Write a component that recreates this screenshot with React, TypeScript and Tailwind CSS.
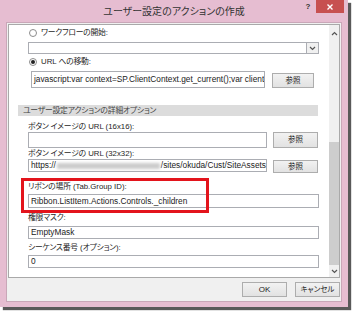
import React from 'react';

const jp = "font-['Liberation_Sans','Noto_Sans_CJK_JP',sans-serif] [font-feature-settings:'palt']";

const J = ({ children }: { children: React.ReactNode }) => (
  <span className="tracking-[-0.2px]">{children}</span>
);

const Radio = ({ checked }: { checked?: boolean }) => (
  <span className="w-[8px] h-[8px] rounded-full border border-[#8c8c8c] bg-white flex items-center justify-center">
    {checked && <span className="w-[4px] h-[4px] rounded-full bg-[#222]" />}
  </span>
);

const Button = ({ label, className = '' }: { label: string; className?: string }) => (
  <div
    className={`flex items-center justify-center border border-[#adadad] bg-gradient-to-b from-[#f2f2f2] to-[#e2e2e2] text-[7.5px] text-[#222] ${className}`}
  >
    {label}
  </div>
);

const Input = ({ value, className = '' }: { value?: React.ReactNode; className?: string }) => (
  <div
    className={`flex items-center border border-[#abadb3] bg-white pl-[2px] overflow-hidden whitespace-nowrap text-[8.3px] text-[#222] font-['Liberation_Sans',sans-serif] ${className}`}
  >
    {value}
  </div>
);

const Label = ({ children, className = '' }: { children: React.ReactNode; className?: string }) => (
  <div className={`h-[9px] ml-[19px] flex items-center text-[7.8px] text-[#1e1e1e] whitespace-pre ${className}`}>
    {children}
  </div>
);

const Chevron = ({ up }: { up?: boolean }) => (
  <svg width="7" height="5" viewBox="0 0 7 5">
    <path d={up ? 'M1 4 L3.5 1.5 L6 4' : 'M1 1 L3.5 3.5 L6 1'} fill="none" stroke="#555" strokeWidth="1.2" />
  </svg>
);

export default function App() {
  return (
    <div className={`w-[353px] h-[312px] bg-white ${jp}`}>
      <div className="w-[348px] h-[307px] bg-[#e6bdd1] shadow-[3px_3px_1px_rgba(60,60,60,0.85)] flex flex-col px-[6px]">
        {/* title bar */}
        <div className="h-[22px] flex -mx-[6px]">
          <div className="w-[48px]" />
          <div className="flex-1 flex items-center justify-center text-[10px] text-[#333] pt-[1px]">
            ユーザー設定のアクションの作成
          </div>
          <div className="w-[48px] flex items-start pr-[4px]">
            <div className="w-[16px] h-[13px] flex items-center justify-center text-[8px] font-bold text-[#333]">?</div>
            <div className="w-[28px] h-[13px] bg-[#c75050] flex items-center justify-center">
              <svg width="6" height="6" viewBox="0 0 6 6">
                <path d="M0.5 0.5 L5.5 5.5 M5.5 0.5 L0.5 5.5" stroke="#fff" strokeWidth="1.4" />
              </svg>
            </div>
          </div>
        </div>

        {/* client area */}
        <div className="h-[280px] border border-[#c9a7b8] bg-[#f0f0f0] flex flex-col px-[1px]">
          <div className="mt-[1px] h-[254px] border border-[#a9a9a9] bg-white flex">
            <div className="relative flex-1 flex flex-col">
              <div className="mt-[3px] h-[10px] flex items-center">
                <div className="ml-[20px]"><Radio /></div>
                <span className="ml-[4px] text-[7.8px] text-[#1e1e1e]"><J>ワークフローの開始:</J></span>
              </div>
              <div className="mt-[4px] ml-[19px] w-[291px] h-[12px] border border-[#abadb3] bg-white flex justify-end">
                <div className="w-[12px] border-l border-[#abadb3] bg-[#f0f0f0] flex items-center justify-center">
                  <Chevron />
                </div>
              </div>
              <div className="mt-[3px] h-[10px] flex items-center">
                <div className="ml-[20px]"><Radio checked /></div>
                <span className="ml-[4px] text-[7.8px] text-[#1e1e1e] whitespace-pre">URL <J>への移動:</J></span>
              </div>
              <div className="mt-[4px] h-[17px] flex">
                <Input
                  className="ml-[22px] w-[234px] h-full"
                  value="javascript:var context=SP.ClientContext.get_current();var client"
                />
                <Button label="参照" className="ml-[7px] w-[42px] h-[15px] self-end" />
              </div>

              <div className="mt-[17px] ml-[9px] w-[300px] h-[11px] bg-[#dcdcdc] flex items-center pl-[5px] text-[7.8px] text-[#444]">
                <J>ユーザー設定アクションの詳細オプション</J>
              </div>

              <Label className="mt-[6px]"><J>ボタン イメージの</J> URL (16x16):</Label>
              <div className="mt-[1px] h-[16px] flex ml-[19px]">
                <Input className="w-[239px] h-full" />
                <Button label="参照" className="ml-[6px] w-[45px] h-full" />
              </div>

              <Label className="mt-[1px]"><J>ボタン イメージの</J> URL (32x32):</Label>
              <div className="mt-[1px] h-[14px] flex ml-[19px]">
                <Input
                  className="w-[239px] h-[13px]"
                  value={
                    <>
                      https://
                      <span className="inline-block w-[106px] h-[6px] mx-[1px] bg-[#cbcbcb] blur-[1.5px]" />
                      /sites/okuda/Cust/SiteAssets
                    </>
                  }
                />
                <Button label="参照" className="ml-[6px] w-[45px] h-[13px] self-end" />
              </div>

              <Label className="mt-[9px]"><J>リボンの場所</J> (Tab.Group ID):</Label>
              <Input className="mt-[3px] ml-[19px] w-[291px] h-[14px]" value="Ribbon.ListItem.Actions.Controls._children" />

              <Label className="mt-[5px]"><J>権限マスク:</J></Label>
              <Input className="mt-[4px] ml-[19px] w-[291px] h-[13px]" value="EmptyMask" />

              <Label className="mt-[4px]"><J>シーケンス番号</J> (<J>オプション</J>):</Label>
              <Input className="mt-[3px] ml-[19px] w-[291px] h-[13px]" value="0" />

              {/* highlight annotation */}
              <div className="absolute left-[12px] top-[153px] w-[188px] h-[35px] border-[3px] border-[#e3141c]" />
            </div>

            {/* scrollbar */}
            <div className="w-[10px] bg-[#f0f0f0] flex flex-col">
              <div className="h-[16px] flex items-center justify-center"><Chevron up /></div>
              <div className="h-[101px]" />
              <div className="h-[123px] bg-[#cdcdcd]" />
              <div className="flex-1 flex items-center justify-center"><Chevron /></div>
            </div>
          </div>

          <div className="mt-[4px] flex justify-end gap-[8px]">
            <Button label="OK" className="w-[45px] h-[15px] border-[#3c7fb1] text-[8px]" />
            <Button label="キャンセル" className="w-[45px] h-[15px]" />
          </div>
        </div>
      </div>
    </div>
  );
}
